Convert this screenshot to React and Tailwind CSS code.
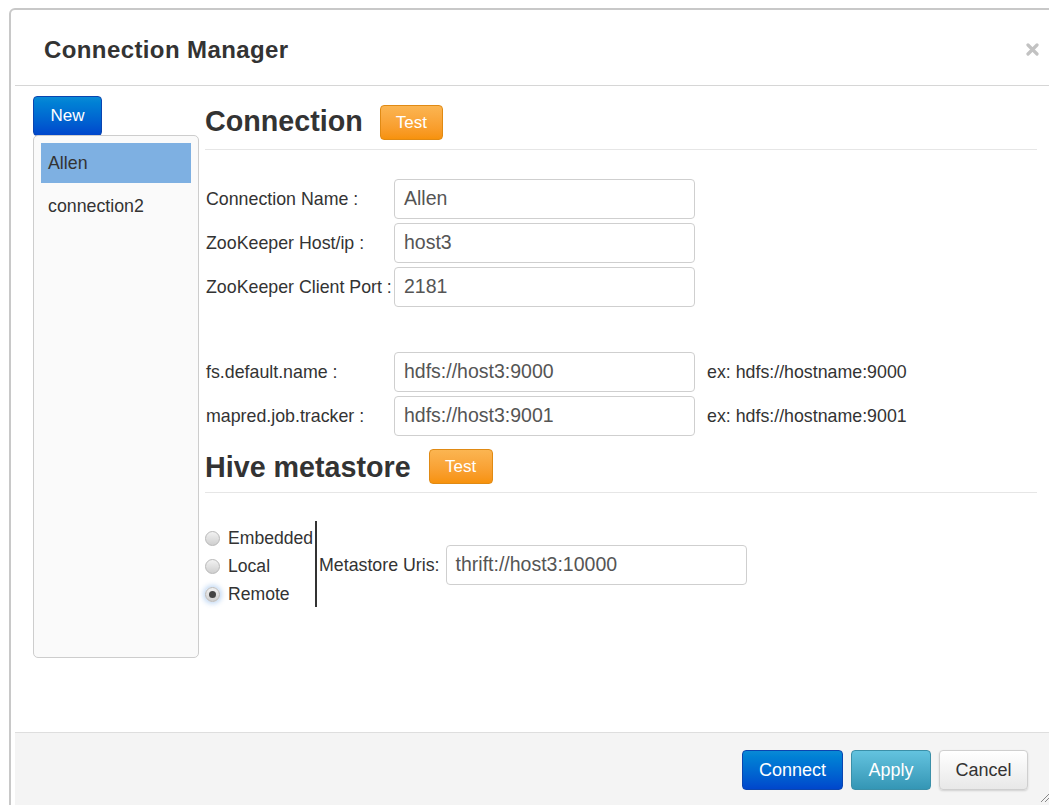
import React from "react";

const font = { fontFamily: '"Liberation Sans", Arial, sans-serif' };

const Btn = ({ kind, children, className = "" }) => {
  const styles = {
    primary:
      "bg-gradient-to-b from-[#0a8ad6] to-[#0046cc] border-[#0a45b0] text-white",
    info: "bg-gradient-to-b from-[#63c3df] to-[#3496b5] border-[#3a8fa8] text-white",
    warning:
      "bg-gradient-to-b from-[#fbb551] to-[#f7920a] border-[#e08a14] text-white",
    plain:
      "bg-gradient-to-b from-white to-[#e8e8e8] border-[#cfcfcf] text-[#333] shadow-[0_1px_2px_rgba(0,0,0,0.15)]",
  };
  return (
    <button
      className={`flex items-center justify-center rounded-[4px] border ${styles[kind]} ${className}`}
    >
      {children}
    </button>
  );
};

const Field = ({ label, value, hint }) => (
  <div className="flex items-center h-[40px]">
    <div className="w-[189px] text-[17.8px] text-[#333] pl-[1px]">{label}</div>
    <div className="w-[301px] h-[40px] border border-[#cfcfcf] rounded-[4px] bg-white flex items-center px-[9px] text-[19.5px] text-[#555]">
      {value}
    </div>
    {hint && <div className="ml-[12px] text-[17.8px] text-[#333]">{hint}</div>}
  </div>
);

const Radio = ({ label, checked }) => (
  <div className="flex items-center h-[28px]">
    <span
      className={`w-[15px] h-[15px] rounded-full border border-[#b8b8b8] bg-gradient-to-b from-[#f2f2f2] to-[#cfcfcf] flex items-center justify-center ${
        checked ? "shadow-[0_0_5px_2px_rgba(120,170,230,0.45)]" : ""
      }`}
    >
      {checked && <span className="w-[7px] h-[7px] rounded-full bg-[#444]" />}
    </span>
    <span className="ml-[8px] text-[17.6px] text-[#333]">{label}</span>
  </div>
);

export default function App() {
  return (
    <div className="w-[1049px] h-[805px] bg-white overflow-hidden pt-[8px] pl-[9px]" style={font}>
      <div className="w-[1050px] h-[820px] border-2 border-[#c8c8c8] rounded-tl-[6px] bg-white pl-[4px] flex flex-col">
        {/* header */}
        <div className="h-[76px] shrink-0 border-b border-[#d6d6d6] flex items-center justify-between pl-[29px] pr-[18px]">
          <h1 className="text-[24px] tracking-[0.4px] font-bold text-[#333] mt-[4px]">Connection Manager</h1>
          <svg className="mt-[4px]" width="13" height="13" viewBox="0 0 13 13">
            <path d="M2 2 L11 11 M11 2 L2 11" stroke="#c2c2c2" strokeWidth="3.2" strokeLinecap="round" />
          </svg>
        </div>

        {/* body */}
        <div className="h-[646px] shrink-0 flex">
          <div className="ml-[18px] mt-[10px] w-[166px] flex flex-col">
            <Btn kind="primary" className="w-[69px] h-[40px] text-[17px]">
              New
            </Btn>
            <div className="h-[523px] -mt-[1px] border border-[#cdcdcd] rounded-[5px] bg-[#fafafa] p-[7px] text-[17.8px] text-[#333]">
              <div className="h-[40px] bg-[#7eb0e2] flex items-center pl-[7px]">Allen</div>
              <div className="h-[47px] flex items-center pl-[7px]">connection2</div>
            </div>
          </div>

          <div className="ml-[6px] flex-1 pr-[20px]">
            <div className="h-[64px] flex items-end pb-[9px] border-b border-[#e6e6e6]">
              <h2 className="text-[28.7px] font-bold text-[#333] leading-none mb-[4px]">Connection</h2>
              <Btn kind="warning" className="ml-[17px] w-[63px] h-[35px] text-[17px]">
                Test
              </Btn>
            </div>

            <div className="mt-[29px] flex flex-col gap-[4px]">
              <Field label="Connection Name :" value="Allen" />
              <Field label="ZooKeeper Host/ip :" value="host3" />
              <Field label="ZooKeeper Client Port :" value="2181" />
            </div>

            <div className="mt-[45px] flex flex-col gap-[4px]">
              <Field label="fs.default.name :" value="hdfs://host3:9000" hint="ex: hdfs://hostname:9000" />
              <Field label="mapred.job.tracker :" value="hdfs://host3:9001" hint="ex: hdfs://hostname:9001" />
            </div>

            <div className="h-[57px] flex items-end pb-[8px] border-b border-[#e6e6e6]">
              <h2 className="text-[28.7px] font-bold text-[#333] leading-none mb-[2px]">Hive metastore</h2>
              <Btn kind="warning" className="ml-[18px] w-[64px] h-[35px] text-[17px]">
                Test
              </Btn>
            </div>

            <div className="mt-[28px] flex">
              <div className="pt-[3px] w-[110px]">
                <Radio label="Embedded" />
                <Radio label="Local" />
                <Radio label="Remote" checked />
              </div>
              <div className="w-[2px] h-[86px] bg-[#333]" />
              <div className="flex items-center h-[86px] pt-[2px]">
                <span className="ml-[2px] text-[17.8px] text-[#333]">Metastore Uris:</span>
                <div className="ml-[6px] w-[301px] h-[40px] border border-[#cfcfcf] rounded-[4px] bg-white flex items-center px-[9px] text-[19.5px] text-[#555]">
                  thrift://host3:10000
                </div>
              </div>
            </div>
          </div>
        </div>

        {/* footer */}
        <div className="flex-1 border-t border-[#dedede] bg-[#f4f4f4] rounded-bl-[6px] flex justify-end items-start pt-[17px] pr-[29px] gap-[8px] relative">
          <Btn kind="primary" className="w-[101px] h-[40px] text-[18px]">
            Connect
          </Btn>
          <Btn kind="info" className="w-[80px] h-[40px] text-[18px]">
            Apply
          </Btn>
          <Btn kind="plain" className="w-[89px] h-[40px] text-[18px]">
            Cancel
          </Btn>
          <svg className="absolute left-[1025px] top-[58px]" width="12" height="12" viewBox="0 0 12 12">
            <path d="M1 11 L11 1 M5 11 L11 5" stroke="#888" strokeWidth="1" fill="none" />
          </svg>
        </div>
      </div>
    </div>
  );
}
